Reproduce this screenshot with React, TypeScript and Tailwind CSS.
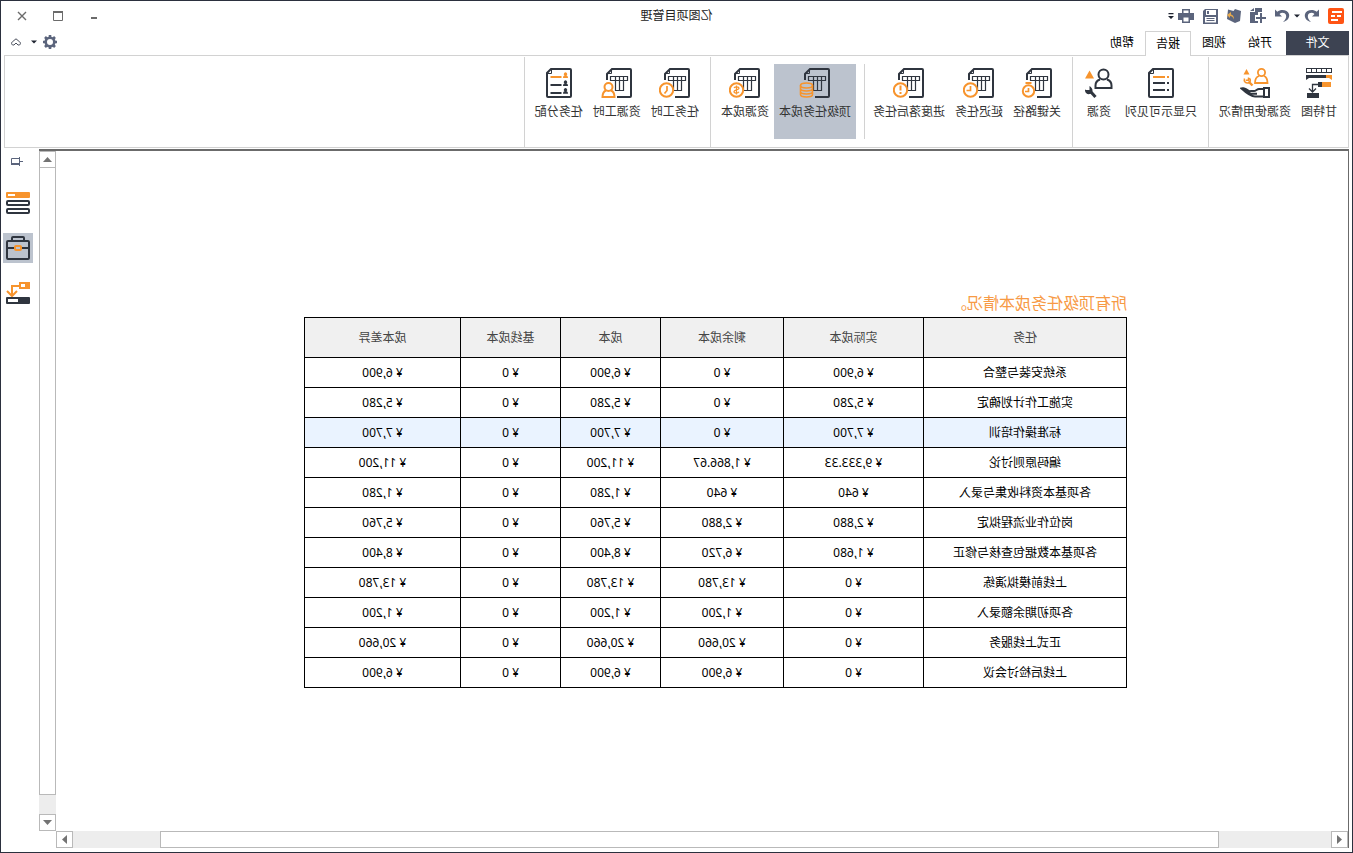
import type { ReactNode } from 'react';

const DARK = '#2f353f';
const ORANGE = '#f7942d';
const SLATE = '#5b647c';

const columns = ['任务', '实际成本', '剩余成本', '成本', '基线成本', '成本差异'];

const rows = [
  ['系统安装与整合', '6,900', '0', '6,900', '0', '6,900'],
  ['实施工作计划确定', '5,280', '0', '5,280', '0', '5,280'],
  ['标准操作培训', '7,700', '0', '7,700', '0', '7,700'],
  ['编码原则讨论', '9,333.33', '1,866.67', '11,200', '0', '11,200'],
  ['各项基本资料收集与录入', '640', '640', '1,280', '0', '1,280'],
  ['岗位作业流程拟定', '2,880', '2,880', '5,760', '0', '5,760'],
  ['各项基本数据包查核与修正', '1,680', '6,720', '8,400', '0', '8,400'],
  ['上线前模拟演练', '0', '13,780', '13,780', '0', '13,780'],
  ['各项初期余额录入', '0', '1,200', '1,200', '0', '1,200'],
  ['正式上线服务', '0', '20,660', '20,660', '0', '20,660'],
  ['上线后检讨会议', '0', '6,900', '6,900', '0', '6,900'],
];

const selectedRow = 2;

const Caret = () => (
  <svg className="w-1.5 h-1" viewBox="0 0 6 4">
    <path d="M0 0.5h6L3 3.5z" fill="#1f2430" />
  </svg>
);

const ToolButton = ({ label, children }: { label: string; children: ReactNode }) => (
  <button aria-label={label} className="flex items-center justify-center">
    {children}
  </button>
);

const Glyph = ({ children }: { children: ReactNode }) => (
  <svg className="w-4 h-4" viewBox="0 0 16 16" fill={SLATE}>
    {children}
  </svg>
);

const Logo = () => (
  <svg className="w-4 h-4" viewBox="0 0 16 16">
    <rect width="16" height="16" rx="2" fill="#ff5414" />
    <path d="M2 3h10v2H2zM3 7h4v2H3zM9 7h4v2H9zM6 11h7v2H6z" fill="#fff" />
  </svg>
);

// Sheet with a small grid; the lower right corner is left open for a badge
const SheetIcon = ({ children }: { children: ReactNode }) => (
  <svg className="w-8 h-[30px]" viewBox="0 0 32 30" fill="none" stroke={DARK}>
    <path d="M16 29H3a1 1 0 0 1-1-1V2a1 1 0 0 1 1-1h18l5 5v6" strokeWidth="2" />
    <path d="M21.5 1.5v4h4" />
    <path d="M5.5 8.5h17v4h-17zM9.5 8.5v14h8v-14M13.5 8.5v14" strokeWidth="1.2" />
    <g stroke={ORANGE} strokeWidth="2">
      {children}
    </g>
  </svg>
);

const ClockBadge = () => (
  <>
    <circle cx="24.5" cy="22" r="6.7" />
    <path d="M24.5 18v4.5h4" strokeWidth="1.7" />
  </>
);

const PagePath = () => (
  <>
    <path d="M21 1H2a1 1 0 0 0-1 1v26a1 1 0 0 0 1 1h22a1 1 0 0 0 1-1V5z" strokeWidth="2" />
    <path d="M20.5 1.5v4h4" />
  </>
);

const GanttIcon = () => (
  <svg className="w-[26px] h-[30px]" viewBox="0 0 26 30" fill="none">
    <path d="M0 0h26v5H0zM1 1v3h4V1zM6 1v3h4V1zM11 1v3h4V1zM16 1v3h4V1zM21 1v3h4V1z" fill={DARK} fillRule="evenodd" />
    <path d="M6 7h20v5l-3-2H6z" fill={DARK} />
    <path d="M0 7h6v3H3l-3 2z" fill={ORANGE} />
    <path d="M1 14h9v5H1z" fill={ORANGE} />
    <path d="M10 14h4v5h-4z" fill={DARK} />
    <path d="M14 16.5h5.5v7M16 20.5l3.5 3.5 3.5-3.5" stroke={DARK} strokeWidth="1.3" />
    <path d="M13 25h12v5H13z" fill={DARK} />
  </svg>
);

const UsageIcon = () => (
  <svg className="w-[30px] h-[30px]" viewBox="0 0 30 30" fill="none">
    <g stroke={ORANGE} strokeWidth="1.8">
      <circle cx="8.5" cy="4.5" r="3.6" />
      <path d="M6 8c-2.5 1-3.5 3-3.5 7H15c0-4-1-6-4-7" />
    </g>
    <path d="M23.5 1l3 5.500h-6z" fill={ORANGE} />
    <path d="M17.5 17.500l4-4" stroke={ORANGE} strokeWidth="2.4" />
    <path d="M21.500 9.500v2.800h2.800M25.500 10.500c1 3-1 5-4 4.500-2-.5-2.500-3-1-4.800" stroke={ORANGE} strokeWidth="1.500" />
    <path d="M1 20h5v9H1zM6 21h5c2 0 3 2 5 2h3c2.500 0 2.500 2.800 0 2.800h-6M6 28.500h9c4 0 8-3 13.500-8-3-.8-5 .5-8.500 3.500M20 25l7-5" stroke={DARK} strokeWidth="2" />
  </svg>
);

const ColumnsIcon = () => (
  <svg className="w-[26px] h-[30px]" viewBox="0 0 26 30" fill="none" stroke={DARK}>
    <PagePath />
    <path d="M5 9h2M9 9h12" stroke={ORANGE} strokeWidth="2" />
    <path d="M5 15h2M9 15h12M5 22h2M9 22h12" strokeWidth="2" />
  </svg>
);

const ResourceIcon = () => (
  <svg className="w-7 h-[30px]" viewBox="0 0 28 30" fill="none">
    <g stroke={DARK} strokeWidth="2">
      <circle cx="9.5" cy="6.5" r="5" />
      <path d="M6 11.5c-3 1-4.500 3-4.500 6V20h16v-2.500c0-3-1.500-5-4.500-6" />
    </g>
    <path d="M23.500 2.500l4.500 8h-9z" fill={ORANGE} />
    <path d="M17.500 29l5-5.500" stroke={DARK} strokeWidth="3" />
    <path d="M23.500 18v4h4l.5-1c.5 3.500-2 5.800-5 5-3-.800-3.800-5.500.5-8z" fill={DARK} />
  </svg>
);

const AssignIcon = () => (
  <svg className="w-[26px] h-[30px]" viewBox="0 0 26 30" fill="none" stroke={DARK}>
    <PagePath />
    <path d="M10.5 9h11" stroke={ORANGE} strokeWidth="2" />
    <path d="M10.5 17h11M10.5 25h11" strokeWidth="2" />
    <g stroke="none">
      <path d="M4 10c0-2 1-2.300 1.500-2.500a1.700 1.700 0 1 1 2 0C8 7.700 9 8 9 10z" fill={ORANGE} />
      <path d="M4 18c0-2 1-2.300 1.500-2.500a1.700 1.700 0 1 1 2 0C8 15.700 9 16 9 18zM4 25.700c0-2 1-2.300 1.500-2.500a1.700 1.700 0 1 1 2 0c.5.200 1.500.5 1.500 2.500z" fill={DARK} />
    </g>
  </svg>
);

interface RibbonButtonProps {
  label: string;
  icon: ReactNode;
  active?: boolean;
}

const RibbonButton = ({ label, icon, active }: RibbonButtonProps) => (
  <button
    className={`flex flex-col items-center min-w-[42px] h-[75px] px-[5px] pt-1 text-xs leading-4 text-[#333] whitespace-nowrap ${
      active ? 'bg-[#bcc3ce]' : 'hover:bg-gray-100'
    }`}
  >
    {icon}
    <span className="mt-1.5">{label}</span>
  </button>
);

const RibbonGroup = ({ children }: { children: ReactNode }) => (
  <div className="flex pl-1.5 pr-[5px] pt-[7px] mt-px border-r border-[#d2d2d2]">{children}</div>
);

const TitleBar = () => (
  <header className="grid grid-cols-[1fr_auto_1fr] items-center h-[30px]">
    <div className="flex items-center gap-2 pl-2">
      <Logo />
      <div className="flex items-center gap-1">
        <ToolButton label="撤销">
          <Glyph>
            <path d="M1 1.5v7h7L5.500 6C7.500 4.200 11 4.500 12 7c.8 2.600-.8 5-3 7 4.500-1 7-4.500 6-8C13.700 1.800 7 .5 3.300 3.800z" />
          </Glyph>
        </ToolButton>
        <Caret />
        <ToolButton label="恢复">
          <Glyph>
            <path d="M15 1.500v7H8L10.500 6C8.500 4.200 5 4.500 4 7c-.8 2.600.8 5 3 7C2.500 13 0 9.500 1 6 2.300 1.800 9 .5 12.700 3.800z" />
          </Glyph>
        </ToolButton>
      </div>
      <ToolButton label="新建">
        <Glyph>
          <path d="M4 0h7v4h5v11H8v-2h3V7H8V4H4zM12 0l4 3h-4z" />
          <path d="M4 5h2v4h4v2H6v4H4v-4H0V9h4z" />
        </Glyph>
      </ToolButton>
      <ToolButton label="打开">
        <Glyph>
          <path d="M1 3l6-2 1.500 2L14 1.500 15 11l-8 4-5-2z" />
          <path d="M8 11.500c0-3 1-4.500 3-5V4l4 3-3 3V8c-2 .3-3 1.200-4 3.500z" fill="#e5a84b" />
        </Glyph>
      </ToolButton>
      <ToolButton label="保存">
        <Glyph>
          <path d="M0 1h13l2 2v13H0zM2 2v5h10V2zM2 9v5.500h11V9zM9 3h2v3H9zM3.500 10h8v1h-8zM3.500 12h8v1h-8z" fillRule="evenodd" />
        </Glyph>
      </ToolButton>
      <div className="flex items-center gap-1">
        <ToolButton label="打印">
          <Glyph>
            <path d="M4 1h8v4h4v7h-4v3H4v-3H0V5h4zM5.500 2.500V5h5V2.500zM5.500 9.500v4h5v-4z" fillRule="evenodd" />
          </Glyph>
        </ToolButton>
        <button aria-label="自定义">
          <svg className="w-1.5 h-2" viewBox="0 0 6 8" fill="#1f2430">
            <path d="M.5 1h5v1.200h-5zM0 4h6L3 7z" />
          </svg>
        </button>
      </div>
    </div>
    <h1 className="text-xs leading-4 text-[#222]">亿图项目管理</h1>
    <div className="flex justify-end pr-[3px]">
      <button aria-label="最小化" className="flex items-center justify-center w-9 h-7">
        <svg className="w-2.5 h-2.5" viewBox="0 0 10 10">
          <path d="M2 7h6" stroke="#6b6b6b" strokeWidth="2" />
        </svg>
      </button>
      <button aria-label="最大化" className="flex items-center justify-center w-9 h-7">
        <svg className="w-2.5 h-2.5" viewBox="0 0 10 10">
          <path d="M.5 1h9v8.500h-9z" fill="none" stroke="#6b6b6b" />
          <path d="M0 1h10" stroke="#6b6b6b" strokeWidth="2" />
        </svg>
      </button>
      <button aria-label="关闭" className="flex items-center justify-center w-9 h-7">
        <svg className="w-2.5 h-2.5" viewBox="0 0 10 10">
          <path d="M1 1l8 8M9 1L1 9" stroke="#6b6b6b" strokeWidth="1.4" />
        </svg>
      </button>
    </div>
  </header>
);

const TabBar = () => (
  <nav className="flex h-6 pl-[3px] pr-2.5 text-xs text-black">
    <button className="w-[63px] mr-[3px] bg-[#3d4352] text-white">文件</button>
    <button className="w-[46px]">开始</button>
    <button className="w-[46px]">视图</button>
    <button className="w-[46px] h-[25px] border border-b-0 border-[#d2d2d2] bg-white z-10">报告</button>
    <button className="w-[46px]">帮助</button>
    <div className="flex items-center gap-2.5 ml-auto pb-0.5">
      <button aria-label="设置" className="flex items-center gap-1.5">
        <svg className="w-3.5 h-3.5" viewBox="0 0 14 14" fill="none" stroke={SLATE}>
          <circle cx="7" cy="7" r="4.3" strokeWidth="2.6" />
          <path d="M7 0v2.500M7 11.500V14M0 7h2.500M11.500 7H14M2 2l2 2M10 10l2 2M12 2l-2 2M4 10l-2 2" strokeWidth="2.6" />
        </svg>
        <Caret />
      </button>
      <button aria-label="收起功能区">
        <svg className="w-2.5 h-2" viewBox="0 0 10 8" fill="none" stroke="#4a4f5c">
          <path d="M5 5L3 7H1.500C.3 6 .3 4.500 1.200 4L5 .8 8.800 4c.9.5.9 2-.3 3H7z" />
        </svg>
      </button>
    </div>
  </nav>
);

const Ribbon = () => (
  <div className="flex h-[93px] mx-[3px] border border-[#d2d2d2]">
    <RibbonGroup>
      <RibbonButton label="甘特图" icon={<GanttIcon />} />
      <RibbonButton label="资源使用情况" icon={<UsageIcon />} />
    </RibbonGroup>
    <RibbonGroup>
      <RibbonButton label="只显示可见列" icon={<ColumnsIcon />} />
      <RibbonButton label="资源" icon={<ResourceIcon />} />
    </RibbonGroup>
    <RibbonGroup>
      <RibbonButton
        label="关键路径"
        icon={
          <SheetIcon>
            <circle cx="24.5" cy="23" r="5.7" />
            <path d="M21.500 15h6" />
            <path d="M24.500 20v3.500H28" strokeWidth="1.7" />
          </SheetIcon>
        }
      />
      <RibbonButton label="延迟任务" icon={<SheetIcon><ClockBadge /></SheetIcon>} />
      <RibbonButton
        label="进度落后任务"
        icon={
          <SheetIcon>
            <circle cx="24.5" cy="22" r="6.7" />
            <path d="M24.500 17.500v5M24.500 24v2" />
          </SheetIcon>
        }
      />
      <div className="w-px h-[75px] ml-[3px] mr-2 bg-[#d2d2d2]" />
      <RibbonButton
        active
        label="顶级任务成本"
        icon={
          <SheetIcon>
            <ellipse cx="24.5" cy="17.5" rx="6" ry="2.5" strokeWidth="1.6" />
            <path d="M18.500 17.500v9c0 3.300 12 3.300 12 0v-9M18.500 20.500c0 3.300 12 3.300 12 0M18.500 23.500c0 3.300 12 3.300 12 0" strokeWidth="1.6" />
          </SheetIcon>
        }
      />
      <RibbonButton
        label="资源成本"
        icon={
          <SheetIcon>
            <circle cx="24.5" cy="22" r="6.7" />
            <path d="M27 20c-1-1.500-5-1.500-5 .3 0 2 5 1.200 5 3.300 0 2-4 2-5 .2M24.500 17.500v9" strokeWidth="1.3" />
          </SheetIcon>
        }
      />
    </RibbonGroup>
    <RibbonGroup>
      <RibbonButton
        label="任务工时"
        icon={
          <SheetIcon>
            <circle cx="24.5" cy="22" r="6.7" />
            <path d="M24 18v4.500l2.500 3" strokeWidth="1.7" />
          </SheetIcon>
        }
      />
      <RibbonButton
        label="资源工时"
        icon={
          <SheetIcon>
            <circle cx="24.5" cy="19" r="4" />
            <path d="M22 22.500c-2.500 1-3.500 3-3.500 6.500h12c0-3.500-1-5.500-3.500-6.500" />
          </SheetIcon>
        }
      />
      <RibbonButton label="任务分配" icon={<AssignIcon />} />
    </RibbonGroup>
  </div>
);

const ScrollButton = ({ label, path }: { label: string; path: string }) => (
  <button aria-label={label} className="flex shrink-0 items-center justify-center w-[17px] h-[17px] border border-[#b9b9b9] bg-white">
    <svg className="w-[9px] h-[9px]" viewBox="0 0 9 9" fill="#737373">
      <path d={path} />
    </svg>
  </button>
);

const CostTable = () => (
  <div className="w-[823px]">
    <h2 className="text-base leading-6 text-[#f79a45]">所有顶级任务成本情况。</h2>
    <table className="w-full mt-0.5 table-fixed border-collapse text-xs text-center text-black">
      <colgroup>
        <col className="w-[203px]" />
        <col className="w-[140px]" />
        <col className="w-[123px]" />
        <col className="w-[100px]" />
        <col className="w-[100px]" />
        <col className="w-[156px]" />
      </colgroup>
      <thead>
        <tr className="h-10 bg-[#f0f0f0] text-[#444]">
          {columns.map((name) => (
            <th key={name} scope="col" className="border border-black font-normal">
              {name}
            </th>
          ))}
        </tr>
      </thead>
      <tbody>
        {rows.map(([task, ...costs], i) => (
          <tr key={task} className={`h-[30px] ${i === selectedRow ? 'bg-[#eaf3ff]' : ''}`}>
            <td className="border border-black">{task}</td>
            {costs.map((cost, j) => (
              <td key={j} className="border border-black">
                ¥ {cost}
              </td>
            ))}
          </tr>
        ))}
      </tbody>
    </table>
  </div>
);

const Sidebar = () => (
  <aside className="flex flex-col items-end w-[38px] pr-0.5 pt-1.5">
    <button aria-label="固定" className="mr-2">
      <svg className="w-3 h-3" viewBox="0 0 12 12" fill="none" stroke={SLATE}>
        <path d="M0 6.500h3.500M3.500 2v9M3.500 3.500h8v6h-8" />
        <path d="M4 9h8" strokeWidth="2" />
      </svg>
    </button>
    <div className="flex flex-col gap-[15px] mt-[21px]">
      <button aria-label="任务列表" className="flex items-center justify-center w-[30px] h-[30px]">
        <svg className="w-6 h-[22px]" viewBox="0 0 24 22" fill="none" strokeWidth="2">
          <rect width="24" height="6" rx="1" fill={ORANGE} />
          <path d="M15 3h7" stroke="#fff" />
          <rect x="1" y="9" width="22" height="4" rx="1" stroke={DARK} />
          <rect x="1" y="17" width="22" height="4" rx="1" stroke={DARK} />
        </svg>
      </button>
      <button aria-label="项目" className="flex items-center justify-center w-[30px] h-[30px] bg-[#bcc3ce]">
        <svg className="w-[26px] h-6" viewBox="0 0 26 24" fill="none" stroke={DARK} strokeWidth="2">
          <rect x="2" y="5" width="22" height="18" rx="1" />
          <path d="M7 5V2a1 1 0 0 1 1-1h10a1 1 0 0 1 1 1v3M2 12h7M17 12h7" />
          <rect x="10" y="10" width="6" height="4" rx="1" stroke={ORANGE} />
        </svg>
      </button>
      <button aria-label="任务路径" className="flex items-center justify-center w-[30px] h-[30px]">
        <svg className="w-6 h-[22px]" viewBox="0 0 24 22" fill="none" stroke={ORANGE} strokeWidth="2">
          <path d="M0 0h11v7H0z" fill={ORANGE} stroke="none" />
          <path d="M5 2h4v3H5z" fill="#fff" stroke="none" />
          <path d="M11 4h7v9M13 9l5 5 5-5" />
          <rect y="15" width="24" height="7" rx="1" fill={DARK} stroke="none" />
          <path d="M12 17h10v3H12z" fill="#fff" stroke="none" />
        </svg>
      </button>
    </div>
  </aside>
);

// The whole window is drawn as its mirror image
export default function App() {
  return (
    <div className="flex flex-col h-screen min-h-[760px] -scale-x-100 overflow-hidden border border-[#2b303e] bg-white font-['Noto_Sans','Noto_Sans_CJK_SC',sans-serif]">
      <TitleBar />
      <TabBar />
      <Ribbon />
      <div className="flex flex-1 min-h-0 mt-px pl-[3px] pb-1">
        <main className="flex flex-col flex-1 min-w-0">
          <div className="flex flex-1 min-h-0 border-t-2 border-l border-[#6b6b6b]">
            <div className="flex-1 min-w-0 overflow-hidden pl-[221px] pt-[140px]">
              <CostTable />
            </div>
            <div className="flex flex-col w-[17px] bg-[#ededed]">
              <ScrollButton label="向上滚动" path="M0 7L4.500 2 9 7z" />
              <div className="flex-1 -mt-px border border-[#b9b9b9] bg-white" />
              <div className="h-[19px]" />
              <ScrollButton label="向下滚动" path="M0 2L4.500 7 9 2z" />
            </div>
          </div>
          <div className="flex border-l border-[#6b6b6b] pr-[17px]">
            <ScrollButton label="向左滚动" path="M7 0L2 4.500 7 9z" />
            <div className="w-28 bg-[#ededed]" />
            <div className="flex-1 border border-[#b9b9b9] bg-white" />
            <div className="w-[87px] bg-[#ededed]" />
            <ScrollButton label="向右滚动" path="M2 0L7 4.500 2 9z" />
          </div>
        </main>
        <Sidebar />
      </div>
    </div>
  );
}
